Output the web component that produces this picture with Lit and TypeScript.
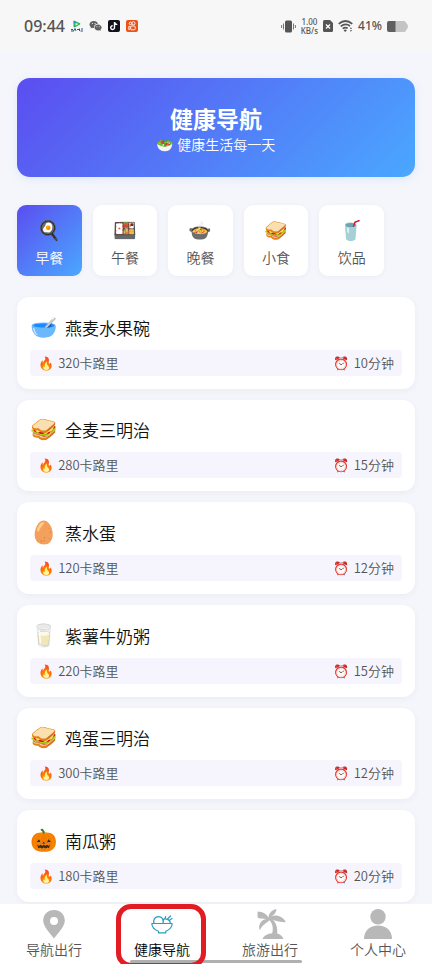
import { LitElement, html, css, svg } from "lit";
import { customElement, state } from "lit/decorators.js";
import { classMap } from "lit/directives/class-map.js";

const categories = [
  { icon: "🍳", label: "早餐" },
  { icon: "🍱", label: "午餐" },
  { icon: "🍲", label: "晚餐" },
  { icon: "🥪", label: "小食" },
  { icon: "🥤", label: "饮品" },
];

const meals = [
  { icon: "🥣", name: "燕麦水果碗", kcal: 320, minutes: 10 },
  { icon: "🥪", name: "全麦三明治", kcal: 280, minutes: 15 },
  { icon: "🥚", name: "蒸水蛋", kcal: 120, minutes: 12 },
  { icon: "🥛", name: "紫薯牛奶粥", kcal: 220, minutes: 15 },
  { icon: "🥪", name: "鸡蛋三明治", kcal: 300, minutes: 12 },
  { icon: "🎃", name: "南瓜粥", kcal: 180, minutes: 20 },
];

const pin = svg`<path fill="#b8b8b8" fill-rule="evenodd" d="M16 2C9.800 2 5.200 6.500 5.200 12.500C5.200 18.500 11.500 24.500 16 30.500C20.500 24.500 26.800 18.500 26.800 12.500C26.800 6.500 22.200 2 16 2ZM16 9a4 4 0 1 1 0 8a4 4 0 0 1 0-8Z"/>`;
const bowl = svg`<g fill="none" stroke="#2b9cc0" stroke-width="1.200" stroke-linecap="round" stroke-linejoin="round"><path d="M5.800 15.500H26.200C26 19.500 23 22 19.800 23.200V24.800H12.500V23.200C9 22 6 19.500 5.800 15.500Z"/><path d="M8 15.300C6.800 11.500 9 8.700 12.500 8.700C16 8.700 18.200 11.500 17 15.300"/><path d="M16.800 12C18 10.800 20 10.500 21.600 11.400C23.600 12.300 24.300 13.800 24.300 15.300"/><path d="M19 10.600L19.600 8.500M21.500 11L24.500 8M23.500 12.200L26 10.500"/></g>`;
const palm = svg`<path fill="#b8b8b8" d="M14.600 9.800C14.500 5.500 17.500 2 22.500 1C22.500 4 20.500 7 17.300 8.500C22.500 6.200 29 8.500 31.800 14.200C27 14.200 22 13.200 18.800 11.400C22.500 15 23.800 20.500 23.200 25.500C26.200 26.300 28.500 28.200 29.500 31H8.500C9.800 27.800 13.500 25.700 18.300 25.300C19.500 20 18.600 15.500 15.600 12.300C13.500 14.500 8.500 16.500 5.800 22.300C3.800 17 7 11.500 12.300 10.900C9.500 10.500 6.300 11 3.800 9.700C3.300 6.900 3.600 4 3.700 3.500C8.500 3.700 12.800 6 14.600 9.800Z"/>`;
const person = svg`<g fill="#b8b8b8"><circle cx="16" cy="8.700" r="7.700"/><path d="M2 31C2 22.500 8 17.500 16 17.500S30 22.500 30 31Z"/></g>`;

const pages = [
  { icon: pin, label: "导航出行" },
  { icon: bowl, label: "健康导航" },
  { icon: palm, label: "旅游出行" },
  { icon: person, label: "个人中心" },
];

@customElement("status-bar")
class StatusBar extends LitElement {
  static styles = css`
    :host {
      display: flex;
      align-items: center;
      justify-content: space-between;
      height: 52px;
      padding: 0 24px;
      background: #f7f7f7;
      color: #555;
      font-family: "Noto Sans", sans-serif;
      font-weight: 500;
    }
    .side { display: flex; align-items: center; gap: 5px; }
    .apps { gap: 6px; }
    .time { font-size: 16px; line-height: 20px; }
    .percent { font-size: 12px; line-height: 16px; }
    .rate { display: grid; font-size: 8px; line-height: 9px; text-align: center; }
    svg { display: block; }
  `;
  render() {
    return html`
      <div class="side apps">
        <span class="time">09:44</span>
        <svg width="12" height="12" viewBox="0 0 12 12" aria-hidden="true">
          <path d="M3 .5Q2.200.3 2.500 2V6.500Q3 8 4.500 7L9 4.600Q9.800 4 9 3.300Z" fill="#27b45b"/>
          <path d="M2.500 1L6 2.500L3 3.500Z" fill="#2a8fe8"/><path d="M4.500 3L7.500 4L4.500 5.500Z" fill="#f4f7d0"/>
          <path d="M0 9.500H2M2.500 11L4 8.500L5 11M6 9.500H8M8.500 8.500V11M10 9H12M0 11H3M9.500 11H12" stroke="#31577c" fill="none"/>
        </svg>
        <svg width="13" height="12" viewBox="0 0 13 12" aria-hidden="true">
          <path fill="#606060" d="M4.800 1C2.200 1 .5 2.600.5 4.500C.5 5.600 1 6.500 2 7.200L1.600 8.500L3.200 7.700Q4 8 4.900 7.900C4.600 5.500 6.500 3.700 9 3.800C8.600 2.100 6.900 1 4.800 1Z"/>
          <path fill="#606060" d="M9 4.500C6.900 4.500 5.500 5.900 5.500 7.500S7 10.500 9 10.500Q9.800 10.500 10.400 10.200L11.700 11L11.400 9.700C12.200 9.200 12.600 8.400 12.600 7.500C12.600 5.900 11 4.500 9 4.500Z"/>
          <g fill="#f7f7f7"><circle cx="3.400" cy="3.500" r=".6"/><circle cx="6.100" cy="3.500" r=".6"/><circle cx="7.900" cy="6.700" r=".5"/><circle cx="10.200" cy="6.700" r=".5"/></g>
        </svg>
        <svg width="12" height="12" viewBox="0 0 12 12" aria-hidden="true">
          <rect width="12" height="12" rx="2" fill="#11111b"/>
          <path d="M6.500 2V7.500A1.900 1.900 0 1 1 4.700 5.700M6.500 2.200Q7 4.300 9.300 4.600" fill="none" stroke="#fff" stroke-width="1.400"/>
        </svg>
        <svg width="12" height="12" viewBox="0 0 12 12" aria-hidden="true">
          <rect width="12" height="12" rx="2" fill="#ed5216"/>
          <g fill="none" stroke="#fff" stroke-width=".9"><circle cx="4.500" cy="3.400" r="1.300"/><circle cx="7.400" cy="3.300" r="1.600"/><rect x="4.700" y="6" width="4.500" height="3.800" rx="1"/><path d="M4.700 7.200L2.800 6.300V9.600L4.700 8.700"/></g>
        </svg>
      </div>
      <div class="side">
        <svg width="15" height="13" viewBox="0 0 15 13" aria-hidden="true">
          <rect x="4" y=".5" width="7" height="12" rx="1.500" fill="#555"/>
          <path d="M2.500 3.500V9.500M.6 5V8M12.500 3.500V9.500M14.400 5V8" stroke="#666" stroke-width=".9"/>
        </svg>
        <span class="rate"><span>1.00</span><span>KB/s</span></span>
        <svg width="10" height="12" viewBox="0 0 10 12" aria-hidden="true">
          <path d="M1.500 0H7L10 3V10.500Q10 12 8.500 12H1.500Q0 12 0 10.500V1.500Q0 0 1.500 0Z" fill="#555"/>
          <path d="M3 4.500L7 8.500M7 4.500L3 8.500" stroke="#fff" stroke-width="1.300"/>
        </svg>
        <svg width="15" height="12" viewBox="0 0 15 12" aria-hidden="true">
          <path d="M.7 3.800Q7.500-1.800 14.300 3.800M2.700 6.400Q7.500 2.400 12 6M4.700 8.700Q7.300 6.500 9.700 8.400" stroke="#555" fill="none" stroke-width="1.700"/>
          <path d="M7.200 12L5.600 10.200Q7.200 8.900 8.900 10.200Z" fill="#555"/><path d="M12 8L13.800 8.500M12 11L13.800 10.500" stroke="#555"/>
        </svg>
        <span class="percent">41%</span>
        <svg width="21" height="11" viewBox="0 0 21 11" aria-hidden="true">
          <path d="M8 0H17Q19 0 19.500 2.500Q21 3.500 21 5.500T19.500 8.500Q19 11 17 11H8Z" fill="#c4c4c4"/>
          <path d="M8.500 0V11H2Q0 11 0 9V2Q0 0 2 0Z" fill="#606060"/>
        </svg>
      </div>
    `;
  }
}

@customElement("meal-card")
class MealCard extends LitElement {
  static properties = { meal: { attribute: false } };
  declare meal: (typeof meals)[number];
  static styles = css`
    :host {
      display: flex;
      flex-direction: column;
      justify-content: flex-end;
      gap: 9px;
      padding: 13px;
      box-sizing: border-box;
      border-radius: 12px;
      background: #fff;
      box-shadow: 0 2px 6px rgba(40, 50, 90, 0.05);
    }
    .head { display: flex; align-items: flex-start; gap: 7px; padding: 0 0 0 1px; }
    .icon { width: 27px; font-size: 22px; line-height: 20px; display: flex; justify-content: center; }
    h2 { margin: 0; font-size: 17px; line-height: 26px; font-weight: 350; color: #111; }
    .facts {
      display: flex;
      justify-content: space-between;
      padding: 3px 8px;
      border-radius: 4px;
      background: #f6f5fd;
      color: #555;
      font-size: 13px;
      line-height: 20px;
      font-weight: 350;
    }
    .fact { display: flex; gap: 4px; }
  `;
  render() {
    const { icon, name, kcal, minutes } = this.meal;
    return html`
      <div class="head"><span class="icon">${icon}</span><h2>${name}</h2></div>
      <div class="facts">
        <span class="fact"><span>🔥</span><span>${kcal}卡路里</span></span>
        <span class="fact"><span>⏰</span><span>${minutes}分钟</span></span>
      </div>
    `;
  }
}

@customElement("app-root")
class AppRoot extends LitElement {
  @state() category = 0;
  @state() page = 1;

  static styles = css`
    :host {
      display: flex;
      flex-direction: column;
      min-height: 100vh;
      background: #f5f6fb;
      font-family: "Noto Sans CJK SC", "Noto Color Emoji", sans-serif;
      font-weight: 350;
    }
    main { flex: 1; display: flex; flex-direction: column; padding: 26px 17px 2px; }
    .banner {
      display: flex;
      flex-direction: column;
      align-items: center;
      padding: 24px 16px 23px;
      border-radius: 13px;
      background: linear-gradient(135deg, #5b4df0, #4aa8ff);
      box-shadow: 0 2px 10px rgba(74, 150, 255, 0.14);
      color: #fff;
    }
    h1 { margin: 0; font-size: 23px; line-height: 32px; font-weight: 700; }
    .banner p { margin: 0; font-size: 14px; line-height: 20px; display: flex; gap: 3px; }
    .tabs {
      display: grid;
      grid-template-columns: repeat(5, 1fr);
      gap: 11px;
      margin: 28px 31px 21px 0;
    }
    button { border: 0; font-family: inherit; font-weight: inherit; cursor: pointer; }
    .tab {
      display: flex;
      flex-direction: column;
      align-items: center;
      gap: 4px;
      padding: 10px 0 9px;
      border-radius: 9px;
      background: #fff;
      color: #555;
      font-size: 14px;
      line-height: 20px;
      box-shadow: 0 1px 5px rgba(40, 50, 90, 0.05);
    }
    .tab.active { background: linear-gradient(135deg, #5b4df0, #4aa8ff); color: #fff; }
    .tab .icon { font-size: 19px; line-height: 28px; }
    .list { flex: 1; display: flex; flex-direction: column; gap: 11px; }
    .list meal-card { flex: 1 0 auto; }
    nav {
      position: sticky;
      bottom: 0;
      display: grid;
      grid-template-columns: repeat(4, 1fr);
      height: 60px;
      background: #fff;
      overflow: hidden;
    }
    .page {
      display: flex;
      flex-direction: column;
      align-items: center;
      padding: 4px 0 0;
      background: none;
      color: #555;
      font-size: 14px;
      line-height: 18px;
    }
    .page.active { color: #000; }
    .page svg { width: 32px; height: 32px; }
    .marker {
      position: absolute;
      top: 0;
      left: calc(25% + 8px);
      width: 90px;
      height: 64px;
      box-sizing: border-box;
      border: 5px solid #e31b23;
      border-radius: 15px;
      pointer-events: none;
    }
    .handle {
      position: absolute;
      bottom: 1px;
      left: 30%;
      width: 40%;
      height: 3px;
      border-radius: 2px;
      background: #b0b0b0;
    }
  `;

  render() {
    return html`
      <status-bar></status-bar>
      <main>
        <header class="banner">
          <h1>健康导航</h1>
          <p><span>🥗</span><span>健康生活每一天</span></p>
        </header>
        <div class="tabs">
          ${categories.map(
            (c, i) => html`<button
              class=${classMap({ tab: true, active: i === this.category })}
              @click=${() => (this.category = i)}
            ><span class="icon">${c.icon}</span><span>${c.label}</span></button>`
          )}
        </div>
        <section class="list">${meals.map((m) => html`<meal-card .meal=${m}></meal-card>`)}</section>
      </main>
      <nav>
        ${pages.map(
          (p, i) => html`<button
            class=${classMap({ page: true, active: i === this.page })}
            @click=${() => (this.page = i)}
          ><svg viewBox="0 0 32 32" aria-hidden="true">${p.icon}</svg><span>${p.label}</span></button>`
        )}
        <span class="handle"></span>
        <span class="marker"></span>
      </nav>
    `;
  }
}
